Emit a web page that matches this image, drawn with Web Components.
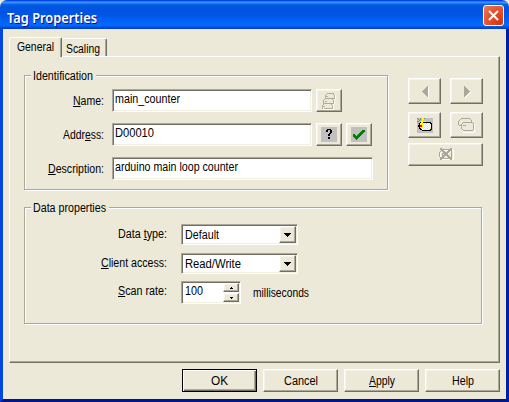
<!DOCTYPE html>
<html lang="en"><head><meta charset="utf-8"><title>Tag Properties</title>
<style>html,body{margin:0;width:509px;height:402px;overflow:hidden;background:#ece9d8;font:12px/14px "Liberation Sans",Arial,sans-serif;color:#000}</style>
</head><body><tag-dialog></tag-dialog>
<script>
const define = (name, html, setup) => customElements.define(name, class extends HTMLElement {
  constructor() {
    super();
    const t = document.createElement('template');
    t.innerHTML = '<style>*{box-sizing:border-box}:host{box-sizing:border-box}</style>' + html;
    this.attachShadow({mode:'open'}).append(t.content.cloneNode(true));
  }
  connectedCallback() { if (setup) setup(this, this.shadowRoot); }
});
const size = el => {
  if (el.hasAttribute('w')) el.style.width = el.getAttribute('w') + 'px';
  if (el.hasAttribute('h')) el.style.height = el.getAttribute('h') + 'px';
};

// Text condensed to a given width
define('fit-text', `<style>:host{display:block;height:14px;white-space:nowrap;flex:none}
span{display:inline-block;transform-origin:0 0;line-height:14px}::slotted(u){text-decoration-thickness:1px;text-underline-offset:1px;text-decoration-skip-ink:none}</style><span><slot></slot></span>`,
(el, r) => { size(el); const s = r.querySelector('span'); s.style.transform = `scaleX(${+el.getAttribute('w') / s.getBoundingClientRect().width})`; });

define('push-button', `<style>
:host{display:flex;align-items:center;justify-content:center;flex:none;height:23px;border:1px solid;border-color:#fff #716f64 #716f64 #fff;box-shadow:inset -1px -1px #aca899,inset 1px 1px #f5f3e9;background:#ece9d8}
:host([default]){border-color:#000;box-shadow:inset 1px 1px #fff,inset -1px -1px #716f64,inset -2px -2px #aca899}
</style><slot></slot>`, size);

define('text-field', `<style>
:host{display:block;flex:none;height:23px;background:#fff;border:1px solid;border-color:#aca899 #fff #fff #aca899;box-shadow:inset 1px 1px #716f64,inset -1px -1px #f1efe2;padding:2px 0 0 2px}
</style><slot></slot>`, size);

define('drop-down', `<style>
:host{display:flex;justify-content:space-between;flex:none;width:117px;height:21px;background:#fff;border:1px solid;border-color:#aca899 #fff #fff #aca899;box-shadow:inset 1px 1px #716f64,inset -1px -1px #f1efe2;padding:1px 1px 1px 3px}
div{padding-top:2px}push-button{height:17px}svg{display:block}</style>
<div><slot></slot></div><push-button w="17"><svg width="7" height="4" shape-rendering="crispEdges"><path d="M0 0h7v1H6v1H5v1H4v1H3V3H2V2H1V1H0z"/></svg></push-button>`);

define('spin-box', `<style>
:host{display:flex;justify-content:space-between;flex:none;width:60px;height:23px;background:#fff;border:1px solid;border-color:#aca899 #fff #fff #aca899;box-shadow:inset 1px 1px #716f64,inset -1px -1px #f1efe2;padding:1px 1px 1px 3px}
div{padding-top:1px}section{display:flex;flex-direction:column;gap:1px}push-button{height:9px}svg{display:block}</style>
<div><slot></slot></div><section><push-button w="16"><svg width="3" height="2" shape-rendering="crispEdges"><path d="M1 0h1v1h1v1H0V1h1z"/></svg></push-button><push-button w="16"><svg width="3" height="2" shape-rendering="crispEdges"><path d="M0 0h3v1H2v1H1V1H0z"/></svg></push-button></section>`);

define('form-row', `<style>:host{display:flex;align-items:flex-start}.l{display:flex;justify-content:flex-end;flex:none;width:var(--label,80px);margin-right:var(--gap,8px);padding-top:var(--top,5px)}</style><div class="l"><slot name="label"></slot></div><slot></slot>`);

define('group-box', `<style>
:host{display:grid;flex:none}
.b{grid-area:1/1;border:1px solid #aca899;box-shadow:1px 1px #fff,inset 1px 1px #fff;margin:0 1px 1px 0}
.t{grid-area:1/1;justify-self:start;align-self:start;background:#ece9d8;margin:-6px 0 0 7px;padding:0 3px 0 2px;height:14px}
.c{grid-area:1/1;padding:var(--pad)}</style><div class="b"></div><div class="t"><slot name="title"></slot></div><div class="c"><slot></slot></div>`, size);

define('tab-item', `<style>
:host{display:block;height:18px;align-self:flex-end;border-top:1px solid #fff;border-right:1px solid #716f64;box-shadow:inset -1px 0 #aca899;border-radius:2px 2px 0 0;padding:3px 0 0 4px}
:host([active]){height:20px;border-left:1px solid #fff;margin-bottom:-1px;padding:2px 0 0 7px;background:#ece9d8;z-index:1}</style><slot></slot>`, size);

const icons = {
prev:['6','10','<path d="M6 1h1v11H6z" fill="#fff"/><path d="M5 0h1v11H5V10H4V9H3V8H2V7H1V6H0V5h1V4h1V3h1V2h1V1h1z" fill="#aca899"/>'],
next:['6','10','<path d="M1 11h1v-1h1V9h1V8h1V7h1V6h1v1H6v1H5v1H4v1H3v1H2v1H1z" fill="#fff"/><path d="M0 0h1v1h1v1h1v1h1v1h1v1h1v1H5v1H4v1H3v1H2v1H1v1H0z" fill="#aca899"/>'],
stack:['14','16','<g fill="none" stroke="#fff" transform="translate(1 1)"><path d="M4.5.5h7l1 1v3l-1 1h-7l-2-1v-2zM2.5 5.5h8l1 1v3l-1 1h-8l-1-1v-3zM1.5 10.5h8l1 1v3l-1 1h-8l-1-1v-3z"/></g><g fill="#ece9d8" stroke="#aca899" stroke-width=".9"><path d="M1.5 10.5h8l1 1v3l-1 1h-8l-1-1v-3zM2.5 5.5h8l1 1v3l-1 1h-8l-1-1v-3zM4.5.5h7l1 1v3l-1 1h-7l-1-1v-3z"/><path d="M4 3.5h2M3 8.5h2M1 13.5h2"/></g>'],
help:['16','15','<path d="M0 0h16v15H0z" fill="#c0c0c0"/><path d="M6 2h4v1H6zM5 3h2v2H5zM9 3h2v3H9zM8 6h2v1H8zM7 7h2v2H7zM7 10h2v2H7z" fill="#000"/>'],
check:['16','15','<path d="M0 0h16v15H0z" fill="#c0c0c0"/><path d="M2 7h2v1h1v1h1V8h1V7h1V6h1V5h1V4h1V3h3v2h-1v1h-1v1h-1v1h-1v1H9v1H8v1H7v1H6v1H5v-1H4v-1H3v-1H2z" fill="#008000"/>'],
new:['16','15','<path d="M0 0h16v15H0z" fill="#c0c0c0"/><path d="M3 4h11v1h1v7h-1v1H5v-1H3v-1H2V9H1V7h1V5h1z" fill="#000"/><path d="M4 5h9v1h1v5h-1v1H5v-1H4v-1H3V6h1z" fill="#ff0"/><g fill="#fff"><path d="M6 5h1v1H6zM8 5h1v1H8zM10 5h1v1h-1zM12 5h1v1h-1zM7 6h1v1H7zM9 6h1v1H9zM11 6h1v1h-1zM13 6h1v1h-1zM6 7h1v1H6zM8 7h1v1H8zM10 7h1v1h-1zM12 7h1v1h-1zM7 8h1v1H7zM9 8h1v1H9zM11 8h1v1h-1zM13 8h1v1h-1zM6 9h1v1H6zM8 9h1v1H8zM10 9h1v1h-1zM12 9h1v1h-1zM5 10h1v1H5zM7 10h1v1H7zM9 10h1v1H9zM11 10h1v1h-1zM6 11h1v1H6zM8 11h1v1H8zM10 11h1v1h-1z"/></g><path d="M0 0h1v1h1v1h1v1H2V2H1V1H0zM3 0h1v2H3zM7 0h1v1H7zM0 3h2v1H0zM1 5h1v1H1z" fill="#808080"/><path d="M5 0h2v2H6v1h3v1H6v2H5v1H3V5h1V3h1z" fill="#ff0"/><path d="M3 7h2v2H3z" fill="red"/>'],
copy:['17','14','<g fill="none" stroke="#fff" transform="translate(1 1)"><path d="M3.5.5h8l2 2v2M3.5.5l-3 3v3l2 2M5.5 4.5h9l1 1v7l-1 1h-9l-2-2v-5z"/></g><g fill="#ece9d8" stroke="#aca899"><path d="M3.5.5h8l2 2v5l-2 1h-8l-3-2v-3z"/><path d="M5.5 4.5h9l1 1v6l-1 1h-9l-2-2v-4z"/><path d="M5 7.5h3"/></g>'],
del:['16','13','<g fill="none" stroke="#fff" transform="translate(1 1)"><path d="M4.5 1.5h10v9h-10l-3-2v-4zM2.5.5l11 11M13.5.5l-11 11"/></g><g fill="none" stroke="#aca899"><path d="M4.5 1.5h9v9h-9l-3-2v-4zM2 .5l11 11M3 .5l11 11M13 .5l-11 11M14 .5l-11 11M4 5.5h2v2H4z"/></g>']
};
define('tool-icon', `<style>:host{display:block}svg{display:block;overflow:visible}</style>`, (el,r) => {
  const [w,h,p] = icons[el.getAttribute('name')];
  r.innerHTML += `<svg width="${w}" height="${h}" shape-rendering="crispEdges">${p}</svg>`;
});

define('nav-pad', `<style>:host{display:grid;grid-template-columns:33px 33px;grid-template-rows:26px 26px 23px;column-gap:9px;align-content:start}
push-button{height:auto}.r2{margin:8px 0 -8px}.wide{grid-column:1/3;margin:13px 0 -13px}</style>
<push-button><tool-icon name="prev"></tool-icon></push-button><push-button><tool-icon name="next"></tool-icon></push-button>
<push-button class="r2"><tool-icon name="new"></tool-icon></push-button><push-button class="r2"><tool-icon name="copy"></tool-icon></push-button>
<push-button class="wide"><tool-icon name="del"></tool-icon></push-button>`);

define('title-bar', `<style>
:host{display:flex;justify-content:space-between;height:29px;padding:5px 5px 0 7px;border-radius:7px 7px 0 0;
background:linear-gradient(#0831d9 0,#0958eb 1px,#3d95ff 2px,#2b90ff 3px,#0867ee 4px,#0355dd 6px,#0054e3 10px,#0055e5 15px,#025ff5 20px,#026afe 24px,#0264f5 26px,#0042cf 28px,#003fc8 29px)}
fit-text{font:600 14px "Noto Sans","Open Sans",sans-serif;color:#fff;text-shadow:1px 1px #0f1089;padding-top:3px}
button{width:21px;height:21px;padding:0;border:1px solid #fff;border-radius:3px;background:radial-gradient(circle at 85% 85%,#cf3b0d,#e5522c 55%,#e97c65);display:grid;place-items:center;font:0/0 sans-serif}</style>
<fit-text w="90">Tag Properties</fit-text><button aria-label="Close"><svg width="13" height="13"><path d="M2 2l9 9M11 2l-9 9" stroke="#fff" stroke-width="2.1"/></svg></button>`);

define('tag-dialog', `<style>
:host{display:flex;flex-direction:column;width:509px;height:402px}
.body{flex:1;display:flex;flex-direction:column;border:solid;border-width:0 3px;border-color:#0046e0;border-right-color:#001ea0;border-bottom:3px solid #001590;padding:7px 6px 7px;background:#ece9d8;background-clip:padding-box}
.tabs{display:flex;height:20px;flex:none}
.panel{height:307px;flex:none;border:1px solid;border-color:#fff #716f64 #716f64 #fff;box-shadow:inset -1px -1px #aca899;padding:18px 0 0 14px}
.top{display:flex;gap:19px;height:132px}
nav-pad{margin-top:3px}
.id{--pad:14px 0 0 0}.data{--pad:17px 0 0 0;--label:143px;--gap:14px;--top:3px}
.rows{display:grid;row-gap:11px}.rows2{display:grid;grid-auto-rows:21px;row-gap:8px}
push-button.tool{margin-left:4px}.ms{margin:5px 0 0 12px}
.actions{display:flex;gap:6px;justify-content:flex-end;margin-top:6px}
</style>
<title-bar></title-bar>
<div class="body">
<div class="tabs"><tab-item w="53" active><fit-text w="37">General</fit-text></tab-item><tab-item w="45"><fit-text w="34">Scaling</fit-text></tab-item></div>
<div class="panel"><div class="top">
<group-box class="id" w="365" h="116"><fit-text slot="title" w="60">Identification</fit-text>
<div class="rows">
<form-row><fit-text slot="label" w="31"><u>N</u>ame:</fit-text><text-field w="200"><fit-text w="65">main_counter</fit-text></text-field><push-button class="tool" w="26"><tool-icon name="stack"></tool-icon></push-button></form-row>
<form-row><fit-text slot="label" w="41">Addr<u>e</u>ss:</fit-text><text-field w="200"><fit-text w="39">D00010</fit-text></text-field><push-button class="tool" w="26"><tool-icon name="help"></tool-icon></push-button><push-button class="tool" w="26"><tool-icon name="check"></tool-icon></push-button></form-row>
<form-row><fit-text slot="label" w="56"><u>D</u>escription:</fit-text><text-field w="261"><fit-text w="123">arduino main loop counter</fit-text></text-field></form-row>
</div></group-box><nav-pad></nav-pad></div>
<group-box class="data" w="459" h="118"><fit-text slot="title" w="73">Data properties</fit-text>
<div class="rows2">
<form-row><fit-text slot="label" w="49">Data <u>t</u>ype:</fit-text><drop-down><fit-text w="34">Default</fit-text></drop-down></form-row>
<form-row><fit-text slot="label" w="66"><u>C</u>lient access:</fit-text><drop-down><fit-text w="56">Read/Write</fit-text></drop-down></form-row>
<form-row style="margin-top:-1px"><fit-text slot="label" w="49"><u>S</u>can rate:</fit-text><spin-box><fit-text w="18">100</fit-text></spin-box><fit-text class="ms" w="56">milliseconds</fit-text></form-row>
</div></group-box></div>
<div class="actions"><push-button w="75" default><fit-text w="17">OK</fit-text></push-button><push-button w="75"><fit-text w="34">Cancel</fit-text></push-button><push-button w="75"><fit-text w="26"><u>A</u>pply</fit-text></push-button><push-button w="75"><fit-text w="22">Help</fit-text></push-button></div>
</div>`);
</script></body></html>
